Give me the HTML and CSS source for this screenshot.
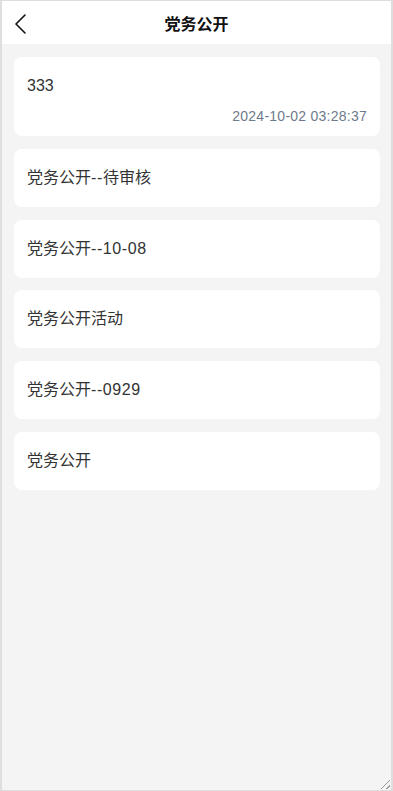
FILE: index.html
```html
<!DOCTYPE html>
<html lang="zh">
<head>
<meta charset="utf-8">
<meta name="viewport" content="width=device-width, initial-scale=1">
<link rel="stylesheet" href="styles.css">
</head>
<body>
<div class="frame">
  <header class="topbar">
    <span class="back">
      <svg width="14" height="22" viewBox="0 0 14 22"><path d="M11 2 L2 11 L11 20" fill="none" stroke="#111" stroke-width="1.6" stroke-linecap="round" stroke-linejoin="round"/></svg>
    </span>
    <h1 class="title">党务公开</h1>
  </header>
  <main class="list">
    <div class="card card-tall">
      <div class="card-text">333</div>
      <div class="card-time">2024-10-02 03:28:37</div>
    </div>
    <div class="card"><div class="card-text">党务公开<span class="latin">--</span>待审核</div></div>
    <div class="card"><div class="card-text">党务公开<span class="latin">--10-08</span></div></div>
    <div class="card"><div class="card-text">党务公开活动</div></div>
    <div class="card"><div class="card-text">党务公开<span class="latin">--0929</span></div></div>
    <div class="card"><div class="card-text">党务公开</div></div>
  </main>
  <span class="grip"></span>
</div>
</body>
</html>
```
FILE: styles.css
```css
* { box-sizing: border-box; }
html, body { margin: 0; padding: 0; }
body {
  font-family: "Liberation Sans", Arial, "Noto Sans CJK SC", sans-serif;
  background: #fff;
}
.frame {
  position: relative;
  width: 393px;
  height: 791px;
  border: 1px solid #dedede;
  border-left-width: 2px;
  border-right-width: 2px;
  background: #f4f4f4;
  overflow: hidden;
}
.topbar {
  position: relative;
  height: 43px;
  background: #fff;
  display: flex;
  align-items: center;
  justify-content: center;
}
.back {
  position: absolute;
  left: 12px;
  top: 12px;
  width: 14px;
  height: 22px;
  display: flex;
}
.title {
  margin: 0;
  font-size: 16px;
  font-weight: bold;
  color: #111;
  font-family: "Noto Sans CJK SC", sans-serif;
  line-height: 1;
}
.list {
  display: flex;
  flex-direction: column;
  gap: 12.75px;
  padding: 13px 11px 0 12px;
}
.card {
  background: #fff;
  border-radius: 8px;
  height: 58px;
  padding: 0 13px;
  display: flex;
  flex-direction: column;
  justify-content: center;
}
.card-tall {
  height: 79px;
  justify-content: flex-start;
  padding-top: 19px;
}
.card-text {
  font-size: 16px;
  color: #333;
  line-height: 20px;
  font-family: "Liberation Sans", Arial, "Noto Sans CJK SC", sans-serif;
}
.latin {
  letter-spacing: 0.6px;
}
.card-time {
  margin-top: 12px;
  text-align: right;
  font-size: 14px;
  letter-spacing: 0.25px;
  color: #6e7a8c;
  line-height: 16px;
}
.grip {
  position: absolute;
  right: 1px;
  bottom: 1px;
  width: 12px;
  height: 12px;
  background: repeating-linear-gradient(135deg, transparent 0 2px, #999 2px 3px, transparent 3px 4px);
  clip-path: polygon(100% 0, 100% 100%, 0 100%);
}
```
